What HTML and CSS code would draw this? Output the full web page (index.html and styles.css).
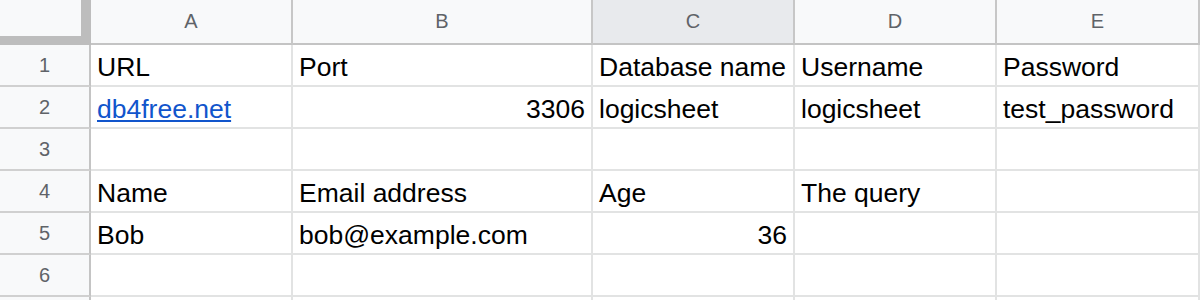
FILE: index.html
```html
<!DOCTYPE html>
<html lang="en">
<head>
<meta charset="utf-8">
<title>Sheet</title>
<link rel="stylesheet" href="styles.css">
</head>
<body>
<div class="sheet">
  <div class="corner"><div class="corner-fill"></div></div>
  <div class="col-head">A</div>
  <div class="col-head">B</div>
  <div class="col-head col-head-active">C</div>
  <div class="col-head">D</div>
  <div class="col-head">E</div>

  <div class="row-head">1</div>
  <div class="cell">URL</div>
  <div class="cell">Port</div>
  <div class="cell">Database name</div>
  <div class="cell">Username</div>
  <div class="cell">Password</div>

  <div class="row-head">2</div>
  <div class="cell"><a class="link" href="#">db4free.net</a></div>
  <div class="cell num">3306</div>
  <div class="cell">logicsheet</div>
  <div class="cell">logicsheet</div>
  <div class="cell">test_password</div>

  <div class="row-head">3</div>
  <div class="cell"></div>
  <div class="cell"></div>
  <div class="cell"></div>
  <div class="cell"></div>
  <div class="cell"></div>

  <div class="row-head">4</div>
  <div class="cell">Name</div>
  <div class="cell">Email address</div>
  <div class="cell">Age</div>
  <div class="cell">The query</div>
  <div class="cell"></div>

  <div class="row-head">5</div>
  <div class="cell">Bob</div>
  <div class="cell">bob@example.com</div>
  <div class="cell num">36</div>
  <div class="cell"></div>
  <div class="cell"></div>

  <div class="row-head">6</div>
  <div class="cell"></div>
  <div class="cell"></div>
  <div class="cell"></div>
  <div class="cell"></div>
  <div class="cell"></div>

  <div class="row-head tail"></div>
  <div class="cell tail"></div>
  <div class="cell tail"></div>
  <div class="cell tail"></div>
  <div class="cell tail"></div>
  <div class="cell tail"></div>
</div>
</body>
</html>
```
FILE: styles.css
```css
html, body {
  margin: 0;
  padding: 0;
  background: #ffffff;
  overflow: hidden;
}

.sheet {
  display: grid;
  grid-template-columns: 91px 202px 300px 202px 202px 203px;
  grid-template-rows: 45px repeat(6, 42px) 3px;
  width: 1200px;
  font-family: "Liberation Sans", Arial, sans-serif;
}

.corner {
  box-sizing: border-box;
  background: #bdbdbd;
  padding: 0 10px 9px 0;
}

.corner-fill {
  width: 100%;
  height: 100%;
  background: #f8f9fa;
}

.col-head {
  box-sizing: border-box;
  display: flex;
  align-items: center;
  justify-content: center;
  background: #f8f9fa;
  border-right: 2px solid #c7c7c7;
  border-bottom: 2px solid #c4c4c4;
  color: #5f6368;
  font-size: 20px;
}

.col-head-active {
  background: #e8eaed;
}

.row-head {
  box-sizing: border-box;
  display: flex;
  align-items: center;
  justify-content: center;
  background: #f8f9fa;
  border-right: 2px solid #c4c4c4;
  border-bottom: 2px solid #d0d0d0;
  color: #5f6368;
  font-size: 20px;
}

.cell {
  box-sizing: border-box;
  display: flex;
  align-items: flex-end;
  padding: 0 6px 3px 6px;
  border-right: 2px solid #e2e3e3;
  border-bottom: 2px solid #e2e3e3;
  color: #000000;
  font-size: 26.5px;
  line-height: 30px;
  white-space: nowrap;
}

.tail {
  border-bottom: none;
  padding: 0;
}

.num {
  justify-content: flex-end;
}

.link {
  color: #1155cc;
  text-decoration: underline;
}
```
